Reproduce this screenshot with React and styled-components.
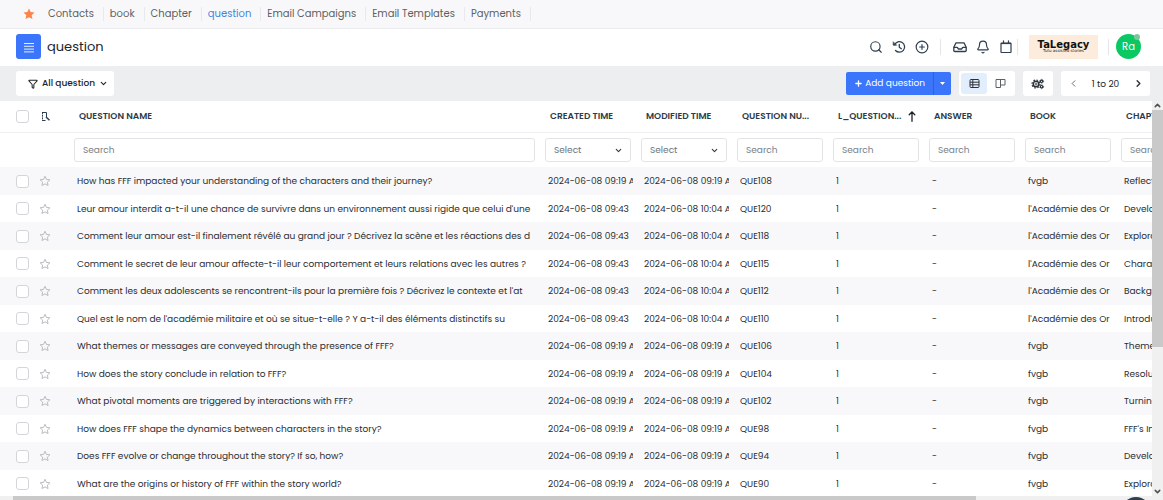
import React from "react";
import styled, { createGlobalStyle, css } from "styled-components";
import { Search, CirclePlus, Bell, Funnel, ChevronDown, ChevronUp, ChevronLeft, ChevronRight, Plus } from "lucide-react";

const GlobalStyle = createGlobalStyle`
  *, *::before, *::after { box-sizing: border-box; }
  body { margin: 0; background: #fff; }
  body, button, input, select { font-family: Poppins, Inter, "Open Sans", sans-serif; }
  button, input, select { margin: 0; padding: 0; border: 0; background: none; color: inherit; font-size: inherit; }
`;

const Page = styled.div`
  display: flex;
  flex-direction: column;
  height: 100vh;
  overflow: hidden;
  color: #2c3b49;
  font-size: 9px;
  line-height: 14px;
`;

const TabBar = styled.nav`
  display: flex;
  align-items: center;
  flex: none;
  height: 29px;
  padding-left: 23px;
  background: #f8f8fa;
  border-bottom: 1px solid #ececee;
`;

const TabStar = styled.svg`
  width: 12px;
  height: 12px;
  margin-right: 7px;
`;

const Tab = styled.a`
  padding: 0 9px 0 6px;
  border-right: 1px solid #e9e9ec;
  font-size: 10px;
  color: ${(p) => (p.$active ? "#4285d8" : "#5d5f62")};
  text-decoration: none;
  white-space: nowrap;
`;

const Header = styled.header`
  display: flex;
  align-items: center;
  flex: none;
  height: 37px;
  padding: 0 22px 2px 16px;
`;

const MenuButton = styled.button`
  display: grid;
  place-items: center;
  width: 25px;
  height: 25px;
  border-radius: 3px;
  background: #3b75fb;
`;

const Title = styled.h1`
  flex: 1;
  margin: 0 0 0 6px;
  font-size: 13px;
  font-weight: 400;
  line-height: 20px;
  color: #212529;
`;

const IconButton = styled.button`
  display: grid;
  place-items: center;
  width: 23px;
  height: 24px;
  color: #2c3e50;
`;

const Divider = styled.span`
  width: 1px;
  height: 16px;
  margin: 0 ${(p) => p.$right}px 0 ${(p) => p.$left}px;
  background: #e3e5e8;
`;

const Brand = styled.div`
  display: flex;
  flex-direction: column;
  align-items: center;
  justify-content: center;
  width: 69px;
  height: 24px;
  background: #fdecdc;
  color: #111;
  font-family: "DejaVu Sans", sans-serif;
`;

const BrandName = styled.strong`
  font-size: 10px;
  line-height: 8px;
`;

const BrandLine = styled.span`
  font-size: 4px;
  line-height: 4px;
`;

const Avatar = styled.div`
  position: relative;
  display: grid;
  place-items: center;
  width: 25px;
  height: 25px;
  border-radius: 50%;
  background: #0ac963;
  color: #fff;
  font-size: 10px;
`;

const Status = styled.span`
  position: absolute;
  top: 0;
  right: 1px;
  width: 6px;
  height: 6px;
  border-radius: 50%;
  background: #7fc59b;
`;

const Toolbar = styled.div`
  display: flex;
  align-items: center;
  flex: none;
  height: 35px;
  padding: 0 13px 0 16px;
  background: #edeef0;
`;

const Panel = styled.div`
  display: flex;
  align-items: center;
  height: 25px;
  margin-left: 8px;
  padding: 0 2px;
  border-radius: 3px;
  background: #fff;
`;

const FilterButton = styled.button`
  display: flex;
  align-items: center;
  gap: 4px;
  height: 25px;
  margin-right: auto;
  padding: 0 6px 0 12px;
  border-radius: 3px;
  background: #fff;
  color: #212529;
  font-weight: 500;
`;

const SplitButton = styled.div`
  display: flex;
  height: 23px;
  border-radius: 2px;
  overflow: hidden;
  background: #3b75fb;
  color: #fff;
`;

const AddButton = styled.button`
  display: flex;
  align-items: center;
  gap: 2px;
  padding: 0 8px;
`;

const MoreButton = styled.button`
  display: grid;
  place-items: center;
  width: 18px;
  border-left: 1px solid #2e62dc;
`;

const ToolButton = styled.button`
  display: grid;
  place-items: center;
  width: ${(p) => p.$width || 26}px;
  height: 21px;
  border-radius: 3px;
  background: ${(p) => (p.$active ? "#e3eefd" : "none")};
  color: ${(p) => (p.$muted ? "#5c6166" : "#2b3138")};
`;

const PageRange = styled.span`
  width: 45px;
  text-align: center;
  color: #212529;
`;

const GridArea = styled.div`
  display: flex;
  flex: 1;
  min-height: 0;
`;

const Scroller = styled.div`
  flex: 1;
  min-width: 0;
  overflow: hidden;
`;

const Table = styled.table`
  width: 1212px;
  table-layout: fixed;
  border-collapse: separate;
  border-spacing: 0;
`;

const Column = styled.col`
  width: ${(p) => p.$width}px;
`;

const HeadCell = styled.th`
  height: 32px;
  padding: 0 5px 1px ${(p) => (p.$first ? 16 : 10)}px;
  border-bottom: 1px solid #eeeff1;
  text-align: left;
  font-weight: 600;
  white-space: nowrap;
  overflow: hidden;
`;

const HeadLabel = styled.span`
  display: flex;
  align-items: center;
  gap: 6px;
`;

const FilterCell = styled.td`
  height: 34px;
  padding: 0 5px;
`;

const fieldBox = css`
  display: block;
  width: 100%;
  height: 24px;
  padding: 0 8px;
  border: 1px solid #e2e4e6;
  border-radius: 3px;
  background: #fff;
  color: #6c757d;
`;

const SearchField = styled.input`
  ${fieldBox}
  &::placeholder { color: #7b8085; opacity: 1; }
`;

const SelectWrap = styled.div`
  position: relative;
  svg {
    position: absolute;
    top: 8px;
    right: 8px;
    pointer-events: none;
    color: #343a40;
  }
`;

const SelectField = styled.select`
  ${fieldBox}
  appearance: none;
`;

const Row = styled.tr`
  height: 27px;
  &:nth-child(odd) {
    height: 28px;
    background: #f8f8fa;
  }
`;

const Cell = styled.td`
  padding: 0 3px 0 ${(p) => (p.$first ? 16 : 8)}px;
  color: #2a2d31;
`;

const Clip = styled.div`
  overflow: hidden;
  white-space: nowrap;
`;

const Checkbox = styled.input.attrs({ type: "checkbox" })`
  appearance: none;
  display: block;
  width: 13px;
  height: 13px;
  border: 1px solid #d3d6d9;
  border-radius: 3px;
  background: #fff;
`;

const Tools = styled.div`
  display: flex;
  align-items: center;
  gap: 10px;
`;

const StarButton = styled.button`
  display: block;
  height: 12px;
  color: #b9bdc1;
`;

const VerticalBar = styled.div`
  display: flex;
  flex-direction: column;
  align-items: center;
  width: 11px;
  background: #f0f0f0;
  color: #505050;
`;

const VerticalThumb = styled.div`
  width: 11px;
  height: 60%;
  background: #c9c9c9;
  margin-bottom: auto;
`;

const HorizontalBar = styled.div`
  flex: none;
  height: 4px;
  padding: 0 187px 0 13px;
  background: #f0f0f0;
`;

const HorizontalThumb = styled.div`
  height: 4px;
  background: #c9c9c9;
`;

const ChatBubble = styled.button`
  position: fixed;
  right: 13px;
  bottom: -25px;
  width: 28px;
  height: 28px;
  border-radius: 50%;
  background: #2c3e50;
`;

const HistoryIcon = () => (
  <svg width="14" height="14" viewBox="0 0 24 24" fill="none" stroke="currentColor" strokeWidth="2.2" strokeLinecap="round" strokeLinejoin="round">
    <path d="M4.500 8a9 9 0 1 1 1.500 10" />
    <path d="M2 3.500v5.500h5.500z" fill="currentColor" strokeWidth="1" />
    <path d="M12.500 7.500v5l3.500 2.500" />
  </svg>
);

const InboxIcon = () => (
  <svg width="14" height="12" viewBox="0 0 14 12" fill="none" stroke="currentColor" strokeWidth="1.300" strokeLinejoin="round">
    <path d="M.8 6.300 3 1.800h8l2.200 4.500v3.200a1 1 0 0 1-1 1H1.800a1 1 0 0 1-1-1z" />
    <path d="M.8 6.300h3.500l1 1.700h3.400l1-1.700h3.500" />
  </svg>
);

const CalendarIcon = () => (
  <svg width="12" height="14" viewBox="0 0 12 14" fill="none" stroke="currentColor" strokeWidth="1.200" strokeLinejoin="round">
    <rect x="1" y="3" width="10" height="9.500" rx=".5" />
    <path d="M1 3.500h10" strokeWidth="1.200" />
    <path d="M3.500 .8v2.500M8.500 .8v2.500" strokeLinecap="round" />
  </svg>
);

const StarOutline = () => (
  <svg width="12" height="12" viewBox="0 0 24 24" fill="none" stroke="currentColor" strokeWidth="2" strokeLinejoin="round">
    <path d="M12 2.500l2.900 6.300 6.900.8-5.100 4.700 1.400 6.800L12 17.700l-6.100 3.400 1.400-6.800-5.100-4.700 6.900-.8z" />
  </svg>
);

const MenuIcon = () => (
  <svg width="12" height="12" viewBox="0 0 12 12" stroke="#e6eeff" strokeWidth="1">
    <path d="M1 2.500h10M1 5.300h10M1 8.100h10M1 10.900h10" />
  </svg>
);

const ListIcon = () => (
  <svg width="11" height="11" viewBox="0 0 11 11" fill="none" stroke="currentColor">
    <rect x="1" y="1.500" width="9" height="8" rx="1" />
    <path d="M1 4.200h9M1 6.800h9M3.800 1.500v8" />
  </svg>
);

const BoardIcon = () => (
  <svg width="11" height="11" viewBox="0 0 11 11" fill="none" stroke="currentColor">
    <path d="M1 1.500h9v5.500H5.500M1 1.500v8h4.500v-8" />
  </svg>
);

const GearsIcon = () => (
  <svg width="14" height="12" viewBox="0 0 14 12" fill="none" stroke="currentColor">
    <circle cx="5" cy="6" r="2.800" strokeWidth="1.400" />
    <circle cx="5" cy="6" r="4" strokeWidth="1.200" strokeDasharray="1.600 1.540" />
    <circle cx="5" cy="6" r="1" strokeWidth=".8" />
    <circle cx="10.600" cy="3.300" r="1.200" strokeWidth="1.200" />
    <circle cx="10.600" cy="8.700" r="1.200" strokeWidth="1.200" />
    <circle cx="10.600" cy="3.300" r="2" strokeWidth=".8" strokeDasharray="1 1.090" />
    <circle cx="10.600" cy="8.700" r="2" strokeWidth=".8" strokeDasharray="1 1.090" />
  </svg>
);

const FreezeIcon = () => (
  <svg width="12" height="11" viewBox="0 0 12 11" fill="none" stroke="#2c3e50">
    <path d="M7.500 6V1.500H3.500M3.500 9.500H6.500" />
    <path d="M3.500 1v9" strokeDasharray="2 .7" />
    <path d="M7 6l3.500 3.200" strokeWidth="1.500" />
  </svg>
);

const SortIcon = () => (
  <svg width="10" height="11" viewBox="0 0 10 11" fill="none" stroke="#1b1f23" strokeWidth="1.300" strokeLinecap="round">
    <path d="M5 10.300V1M2.200 3.800 5 1l2.800 2.800" />
  </svg>
);

const CaretIcon = () => (
  <svg width="5" height="3" viewBox="0 0 5 3" fill="currentColor"><path d="M0 0h5L2.500 3z" /></svg>
);

const tabs = ["Contacts", "book", "Chapter", "question", "Email Campaigns", "Email Templates", "Payments"];

const columns = [
  { label: "QUESTION NAME", width: 471, filter: "search" },
  { label: "CREATED TIME", width: 96, filter: "select" },
  { label: "MODIFIED TIME", width: 96, filter: "select" },
  { label: "QUESTION NU...", width: 96, filter: "search" },
  { label: "L_QUESTION...", width: 96, filter: "search", sorted: true },
  { label: "ANSWER", width: 96, filter: "search" },
  { label: "BOOK", width: 96, filter: "search" },
  { label: "CHAPTER", width: 96, filter: "search" },
];

const early = "2024-06-08 09:19 A";
const late = "2024-06-08 09:43";
const edited = "2024-06-08 10:04 A";
const academy = "l'Académie des Or";

const rows = [
  ["How has FFF impacted your understanding of the characters and their journey?", early, early, "QUE108", "1", "-", "fvgb", "Reflect"],
  ["Leur amour interdit a-t-il une chance de survivre dans un environnement aussi rigide que celui d'une", late, edited, "QUE120", "1", "-", academy, "Develo"],
  ["Comment leur amour est-il finalement révélé au grand jour ? Décrivez la scène et les réactions des d", late, edited, "QUE118", "1", "-", academy, "Explora"],
  ["Comment le secret de leur amour affecte-t-il leur comportement et leurs relations avec les autres ?", late, edited, "QUE115", "1", "-", academy, "Charac"],
  ["Comment les deux adolescents se rencontrent-ils pour la première fois ? Décrivez le contexte et l'at", late, edited, "QUE112", "1", "-", academy, "Backgr"],
  ["Quel est le nom de l'académie militaire et où se situe-t-elle ? Y a-t-il des éléments distinctifs su", late, edited, "QUE110", "1", "-", academy, "Introdu"],
  ["What themes or messages are conveyed through the presence of FFF?", early, early, "QUE106", "1", "-", "fvgb", "Themes"],
  ["How does the story conclude in relation to FFF?", early, early, "QUE104", "1", "-", "fvgb", "Resolut"],
  ["What pivotal moments are triggered by interactions with FFF?", early, early, "QUE102", "1", "-", "fvgb", "Turning"],
  ["How does FFF shape the dynamics between characters in the story?", early, early, "QUE98", "1", "-", "fvgb", "FFF's In"],
  ["Does FFF evolve or change throughout the story? If so, how?", early, early, "QUE94", "1", "-", "fvgb", "Develo"],
  ["What are the origins or history of FFF within the story world?", early, early, "QUE90", "1", "-", "fvgb", "Explora"],
];

export default function App() {
  return (
    <Page>
      <GlobalStyle />
      <TabBar>
        <TabStar viewBox="0 0 24 24" fill="#f9854a">
          <path d="M12 1l3.300 7.200 7.700.9-5.700 5.300 1.600 7.800-6.900-3.900-6.900 3.900 1.600-7.800L1 9.100l7.700-.9z" />
        </TabStar>
        {tabs.map((t) => (
          <Tab key={t} href="#" $active={t === "question"}>{t}</Tab>
        ))}
      </TabBar>
      <Header>
        <MenuButton aria-label="Menu"><MenuIcon /></MenuButton>
        <Title>question</Title>
        <IconButton aria-label="Search"><Search size={14} /></IconButton>
        <IconButton aria-label="History"><HistoryIcon /></IconButton>
        <IconButton aria-label="Add"><CirclePlus size={14} /></IconButton>
        <Divider $left={7} $right={7} />
        <IconButton aria-label="Inbox"><InboxIcon /></IconButton>
        <IconButton aria-label="Notifications"><Bell size={14} /></IconButton>
        <IconButton aria-label="Calendar"><CalendarIcon /></IconButton>
        <Divider $left={0} $right={11} />
        <Brand>
          <BrandName>TaLegacy</BrandName>
          <BrandLine>Tutu assisted stories</BrandLine>
        </Brand>
        <Divider $left={10} $right={7} />
        <Avatar>Ra<Status /></Avatar>
      </Header>
      <Toolbar>
        <FilterButton>
          <Funnel size={10} strokeWidth={2.5} />
          All question
          <ChevronDown size={9} strokeWidth={3} />
        </FilterButton>
        <SplitButton>
          <AddButton><Plus size={9} strokeWidth={3.5} />Add question</AddButton>
          <MoreButton aria-label="More"><CaretIcon /></MoreButton>
        </SplitButton>
        <Panel>
          <ToolButton $active aria-label="List view"><ListIcon /></ToolButton>
          <ToolButton $muted aria-label="Board view"><BoardIcon /></ToolButton>
        </Panel>
        <Panel>
          <ToolButton aria-label="Settings"><GearsIcon /></ToolButton>
        </Panel>
        <Panel>
          <ToolButton $muted $width={20} aria-label="Previous page"><ChevronLeft size={11} /></ToolButton>
          <PageRange>1 to 20</PageRange>
          <ToolButton $width={20} aria-label="Next page"><ChevronRight size={11} strokeWidth={3} /></ToolButton>
        </Panel>
      </Toolbar>
      <GridArea>
        <Scroller>
          <Table>
            <colgroup>
              <Column $width={69} />
              {columns.map((c) => <Column key={c.label} $width={c.width} />)}
            </colgroup>
            <thead>
              <tr>
                <HeadCell $first>
                  <Tools><Checkbox aria-label="Select all" /><FreezeIcon /></Tools>
                </HeadCell>
                {columns.map((c) => (
                  <HeadCell key={c.label}>
                    <HeadLabel>{c.label}{c.sorted && <SortIcon />}</HeadLabel>
                  </HeadCell>
                ))}
              </tr>
              <tr>
                <FilterCell />
                {columns.map((c) => (
                  <FilterCell key={c.label}>
                    {c.filter === "search" ? (
                      <SearchField placeholder="Search" aria-label={c.label} />
                    ) : (
                      <SelectWrap>
                        <SelectField aria-label={c.label}><option>Select</option></SelectField>
                        <ChevronDown size={9} strokeWidth={3} />
                      </SelectWrap>
                    )}
                  </FilterCell>
                ))}
              </tr>
            </thead>
            <tbody>
              {rows.map((r) => (
                <Row key={r[3]}>
                  <Cell $first>
                    <Tools>
                      <Checkbox aria-label={r[3]} />
                      <StarButton aria-label="Follow"><StarOutline /></StarButton>
                    </Tools>
                  </Cell>
                  {r.map((v, i) => <Cell key={i}><Clip>{v}</Clip></Cell>)}
                </Row>
              ))}
            </tbody>
          </Table>
        </Scroller>
        <VerticalBar>
          <ChevronUp size={9} strokeWidth={4} />
          <VerticalThumb />
          <ChevronDown size={9} strokeWidth={4} />
        </VerticalBar>
      </GridArea>
      <HorizontalBar><HorizontalThumb /></HorizontalBar>
      <ChatBubble aria-label="Chat" />
    </Page>
  );
}
